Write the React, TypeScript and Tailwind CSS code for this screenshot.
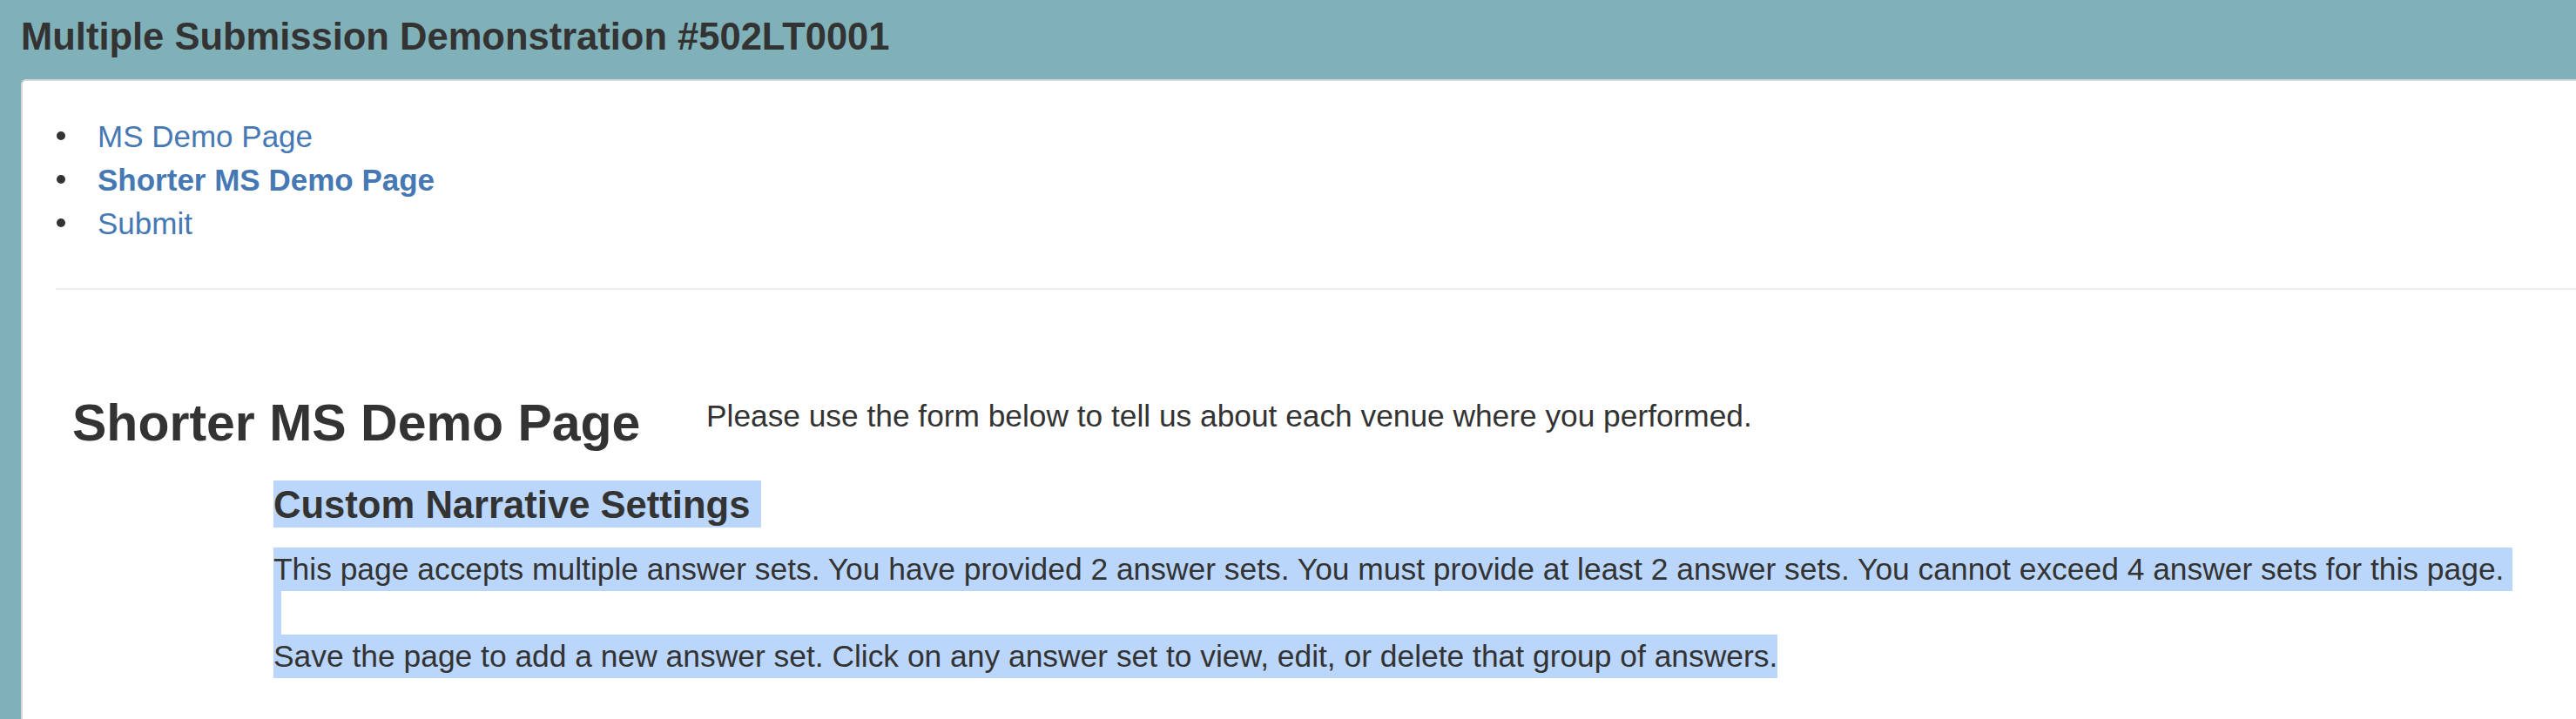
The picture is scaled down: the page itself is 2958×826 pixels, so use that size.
import React from "react";

const font = { fontFamily: '"Liberation Sans", Helvetica, Arial, sans-serif' };

export default function App() {
  return (
    <div
      className="flex h-[826px] w-full flex-col overflow-hidden bg-[#80b1b8] text-[#333333]"
      style={font}
    >
      <div className="h-[91px] shrink-0 pl-[24px] pt-[18px]">
        <h1 className="m-0 text-[43.5px] font-bold leading-[49px] whitespace-nowrap">
          Multiple Submission Demonstration #502LT0001
        </h1>
      </div>
      <div className="ml-[24px] flex-1 rounded-tl-[6px] border-l-2 border-t-2 border-[#d8d8d8] bg-white pl-[38px] pt-[39px]">
        <ul className="m-0 flex list-none flex-col p-0">
          {[
            { t: "MS Demo Page", b: false },
            { t: "Shorter MS Demo Page", b: true },
            { t: "Submit", b: false },
          ].map((it) => (
            <li key={it.t} className="flex h-[50px] items-center">
              <span className="ml-[1px] mt-[-2px] h-[10px] w-[10px] shrink-0 rounded-full bg-[#333333]" />
              <a
                className={`ml-[37px] text-[35px] leading-[50px] text-[#4679b4] whitespace-nowrap ${
                  it.b ? "font-bold" : "font-normal"
                }`}
              >
                {it.t}
              </a>
            </li>
          ))}
        </ul>
        <div className="mt-[49px] h-[2px] w-full bg-[#eeeeee]" />
        <div className="mt-[120px] flex items-start">
          <h2 className="m-0 ml-[19px] w-[728px] shrink-0 text-[59px] font-bold leading-[66px] whitespace-nowrap">
            Shorter MS Demo Page
          </h2>
          <p className="m-0 text-[35.3px] leading-[50px] whitespace-nowrap">
            Please use the form below to tell us about each venue where you performed.
          </p>
        </div>
        <div className="ml-[250px] mt-[33px] flex flex-col items-start">
          <span className="box-border inline-block h-[54px] bg-[#bbd6fb] pt-[3px] text-[43.6px] font-bold leading-[51px] whitespace-nowrap">
            Custom Narrative Settings{"\u00a0"}
          </span>
          <span className="mt-[23px] inline-block h-[50px] bg-[#bbd6fb] text-[35.4px] leading-[50px] whitespace-nowrap">
            This page accepts multiple answer sets. You have provided 2 answer sets. You must provide at least 2 answer sets. You cannot exceed 4 answer sets for this page.{"\u00a0"}
          </span>
          <span className="block h-[50px] w-[9px] bg-[#bbd6fb]" />
          <span className="inline-block h-[50px] bg-[#bbd6fb] text-[35.4px] leading-[50px] whitespace-nowrap">
            Save the page to add a new answer set. Click on any answer set to view, edit, or delete that group of answers.
          </span>
        </div>
      </div>
    </div>
  );
}
